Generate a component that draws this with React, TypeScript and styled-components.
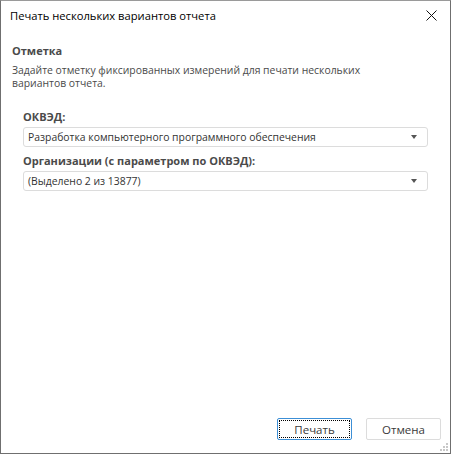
import React from "react";
import styled, { createGlobalStyle } from "styled-components";

const GlobalStyle = createGlobalStyle`
  html, body {
    margin: 0;
    padding: 0;
    background: #ffffff;
  }
  body {
    font-family: "Open Sans", "Liberation Sans", sans-serif;
  }
`;

const Window = styled.div`
  box-sizing: border-box;
  width: 451px;
  height: 454px;
  border: 1px solid #6f6f6f;
  border-top-color: #9a9a9a;
  background: #ffffff;
  display: flex;
  flex-direction: column;
  position: relative;
`;

const TitleBar = styled.div`
  height: 29px;
  display: flex;
  align-items: center;
  justify-content: space-between;
  padding: 0 0 0 9px;
`;

const Title = styled.div`
  font-size: 11.2px;
  color: #000000;
`;

const CloseButton = styled.button`
  width: 24px;
  height: 29px;
  border: none;
  background: transparent;
  display: flex;
  align-items: center;
  justify-content: flex-start;
  padding: 0;
`;

const Body = styled.div`
  flex: 1;
  display: flex;
  flex-direction: column;
  padding: 13px 22px 0 11px;
`;

const SectionTitle = styled.div`
  font-size: 11px;
  font-weight: 700;
  color: #4a4a4a;
  line-height: 15px;
`;

const Description = styled.div`
  margin-top: 6px;
  font-size: 10.4px;
  color: #4a4a4a;
  line-height: 13px;
  width: 370px;
`;

const Fields = styled.div`
  margin-top: 19px;
  padding-left: 11px;
  display: flex;
  flex-direction: column;
`;

const Label = styled.div<{ $gap?: number }>`
  font-size: 11px;
  font-weight: 700;
  color: #4a4a4a;
  line-height: 15px;
  margin-top: ${(p) => p.$gap ?? 0}px;
`;

const Combo = styled.div`
  box-sizing: border-box;
  margin-top: 3px;
  height: 20px;
  border: 1px solid #dcdcdc;
  border-radius: 3px;
  display: flex;
  align-items: center;
  justify-content: space-between;
  padding: 0 10px 0 4px;
  font-size: 10.4px;
  color: #333333;
`;

const Arrow = styled.span`
  width: 0;
  height: 0;
  border-left: 3.5px solid transparent;
  border-right: 3.5px solid transparent;
  border-top: 4px solid #555555;
`;

const Footer = styled.div`
  display: flex;
  justify-content: flex-end;
  gap: 14px;
  padding: 0 9px 13px 0;
`;

const Button = styled.button<{ $primary?: boolean }>`
  box-sizing: border-box;
  width: 75px;
  height: 22px;
  background: #ffffff;
  border: 1px solid ${(p) => (p.$primary ? "#3c8fd6" : "#dcdcdc")};
  border-radius: 2px;
  font-family: "Open Sans", "Liberation Sans", sans-serif;
  font-size: 11.5px;
  color: #3a3a3a;
  padding: 1px;
  display: flex;
`;

const ButtonFace = styled.span<{ $focus?: boolean }>`
  flex: 1;
  display: flex;
  align-items: center;
  justify-content: center;
  border: 1px dotted ${(p) => (p.$focus ? "#000000" : "transparent")};
`;

const Grip = styled.svg`
  position: absolute;
  right: 1px;
  bottom: 1px;
`;

export default function App() {
  return (
    <>
      <GlobalStyle />
      <Window>
        <TitleBar>
          <Title>Печать нескольких вариантов отчета</Title>
          <CloseButton aria-label="close">
            <svg width="11" height="11" viewBox="0 0 11 11">
              <path d="M0.5 0.5 L10.5 10.5 M10.5 0.5 L0.5 10.5" stroke="#111" strokeWidth="1" />
            </svg>
          </CloseButton>
        </TitleBar>
        <Body>
          <SectionTitle>Отметка</SectionTitle>
          <Description>
            Задайте отметку фиксированных измерений для печати нескольких вариантов отчета.
          </Description>
          <Fields>
            <Label>ОКВЭД:</Label>
            <Combo>
              <span>Разработка компьютерного программного обеспечения</span>
              <Arrow />
            </Combo>
            <Label $gap={6}>Организации (с параметром по ОКВЭД):</Label>
            <Combo>
              <span>(Выделено 2 из 13877)</span>
              <Arrow />
            </Combo>
          </Fields>
        </Body>
        <Footer>
          <Button $primary>
            <ButtonFace $focus>Печать</ButtonFace>
          </Button>
          <Button>
            <ButtonFace>Отмена</ButtonFace>
          </Button>
        </Footer>
        <Grip width="10" height="10" viewBox="0 0 10 10">
          {[
            [7, 1],
            [7, 4],
            [4, 4],
            [7, 7],
            [4, 7],
            [1, 7],
          ].map(([x, y], i) => (
            <rect key={i} x={x} y={y} width="2" height="2" fill="#c8c8c8" />
          ))}
        </Grip>
      </Window>
    </>
  );
}
